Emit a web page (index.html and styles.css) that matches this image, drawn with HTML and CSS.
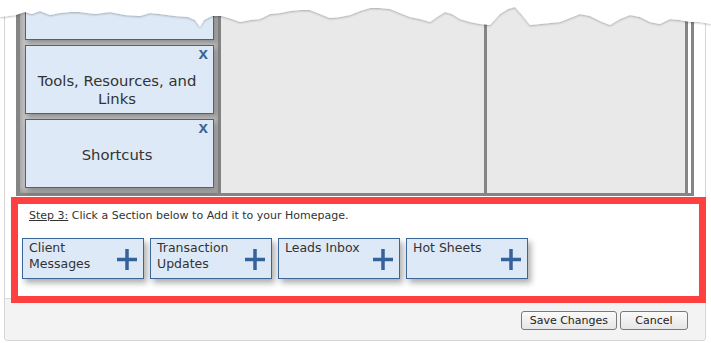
FILE: index.html
```html
<!DOCTYPE html>
<html lang="en">
<head>
  <meta charset="UTF-8" />
  <meta name="viewport" content="width=device-width, initial-scale=1" />
  <title>Customize Homepage</title>
  <link rel="stylesheet" href="styles.css">
</head>
<body>

<div class="panel">
  <div class="columns">
    <div class="col col-main">
      <div class="section-card section-card-cut"></div>
      <div class="section-card">
        <span class="close">x</span>
        <div class="section-title">Tools, Resources, and Links</div>
      </div>
      <div class="section-card">
        <span class="close">x</span>
        <div class="section-title">Shortcuts</div>
      </div>
    </div>
    <div class="col col-wide"></div>
    <div class="col col-side"></div>
  </div>

  <div class="step">
    <div class="step-text"><span class="step-label">Step 3:</span> Click a Section below to Add it to your Homepage.</div>
    <div class="add-list">
      <div class="add-card">
        <span class="add-name">Client<br>Messages</span>
        <svg class="plus" width="20" height="21" viewBox="0 0 20 21"><path d="M10 0V21M0 10.5H20" /></svg>
      </div>
      <div class="add-card">
        <span class="add-name">Transaction<br>Updates</span>
        <svg class="plus" width="20" height="21" viewBox="0 0 20 21"><path d="M10 0V21M0 10.5H20" /></svg>
      </div>
      <div class="add-card">
        <span class="add-name">Leads Inbox</span>
        <svg class="plus" width="20" height="21" viewBox="0 0 20 21"><path d="M10 0V21M0 10.5H20" /></svg>
      </div>
      <div class="add-card">
        <span class="add-name">Hot Sheets</span>
        <svg class="plus" width="20" height="21" viewBox="0 0 20 21"><path d="M10 0V21M0 10.5H20" /></svg>
      </div>
    </div>
  </div>

  <footer class="actions">
    <button class="btn">Save Changes</button>
    <button class="btn btn-cancel">Cancel</button>
  </footer>
</div>

<!-- torn edge of the cropped screenshot -->
<svg class="torn" width="711" height="34" viewBox="0 0 711 34">
  <defs>
    <filter id="tornShadow" x="-5%" y="-50%" width="110%" height="200%">
      <feDropShadow dx="0" dy="1" stdDeviation="1.2" flood-color="#000" flood-opacity="0.28" />
    </filter>
  </defs>
  <polygon filter="url(#tornShadow)" fill="#fff" points="0,0 0,17 16,15 25,12 32,14 40,11 50,15 60,13 70,12 80,12 95,14 110,12 125,15 140,16 150,13 160,14 175,16 188,17 195,20 200,27 204,20 212,16 222,16 232,19 240,22 250,20 260,19 270,14 280,13 290,11 300,10 310,10 320,14 330,18 340,17 350,15 360,11 370,8 380,8 390,9 400,13 410,17 420,19 430,22 437,17 445,12 452,14 460,19 470,22 480,24 490,25 500,14 508,9 515,7 522,15 530,25 540,24 550,23 560,22 570,18 580,14 590,16 600,21 610,25 620,19 630,15 640,17 650,22 660,24 670,19 680,20 690,22 700,22 711,24 711,0" />
</svg>

</body>
</html>
```

FILE: styles.css
```css
html, body {
  margin: 0;
  background: #fff;
  font-family: "DejaVu Sans", Verdana, sans-serif;
  color: #333;
  overflow: hidden;
}
.panel {
  margin-left: 4px;
  width: 702px;
  box-sizing: border-box;
  border: 1px solid #d6d6d6;
  border-top: none;
  border-radius: 0 0 4px 4px;
  background: #fff;
}
.columns {
  display: flex;
  margin: -34px 0 0 11px;
  width: 678px;
  box-sizing: border-box;
  border-left: 4px solid #858585;
  border-right: 3px solid #858585;
  border-bottom: 3px solid #858585;
  padding-right: 3px;
  background: #fff;
}
.col {
  box-sizing: border-box;
  border-right: 3px solid #858585;
  background: #e9e9e9;
}
.col-main {
  width: 201px;
  padding: 5px 4px 5px 5px;
  background: #c9c9c9;
  box-shadow: inset 0 0 6px rgba(0,0,0,0.35);
  display: flex;
  flex-direction: column;
  gap: 5px;
}
.col-wide { width: 266px; }
.col-side { width: 201px; }
.section-card {
  height: 69px;
  box-sizing: border-box;
  border: 1px solid #3b6698;
  background: #dde9f6;
  box-shadow: 2px 3px 5px rgba(0,0,0,0.3);
  padding: 1px 5px 0 5px;
}
.close {
  display: block;
  height: 14px;
  line-height: 14px;
  text-align: right;
  font-family: "Liberation Sans", Arial, sans-serif;
  font-weight: bold;
  font-size: 17px;
  color: #3b6698;
}
.section-title {
  margin-top: 11px;
  padding-right: 5px;
  text-align: center;
  font-size: 14.8px;
  line-height: 18px;
}
.step {
  position: relative;
  height: 102px;
  box-sizing: border-box;
  padding: 13px 0 0 17px;
}
.step::after {
  content: '';
  position: absolute;
  top: 1px;
  left: 6px;
  right: -1px;
  height: 106px;
  box-sizing: border-box;
  border: 7px solid #ff4040;
  pointer-events: none;
}
.step-text {
  margin-left: 7px;
  font-size: 11px;
  line-height: 14px;
}
.step-label { text-decoration: underline; }
.add-list {
  display: flex;
  gap: 6px;
  margin-top: 15px;
}
.add-card {
  display: flex;
  justify-content: space-between;
  align-items: flex-start;
  width: 122px;
  height: 41px;
  box-sizing: border-box;
  border: 1px solid #3b6698;
  background: #dde9f6;
  box-shadow: 3px 4px 6px rgba(0,0,0,0.32);
  padding: 1px 6px 0 6px;
  cursor: pointer;
}
.add-name {
  font-size: 12.5px;
  line-height: 15.5px;
}
.plus {
  flex-shrink: 0;
  margin-top: 9px;
}
.plus path {
  stroke: #33639a;
  stroke-width: 3.5;
  fill: none;
}
.actions {
  display: flex;
  justify-content: flex-end;
  gap: 3px;
  height: 42px;
  box-sizing: border-box;
  border-top: 1px solid #dcdcdc;
  background: #f3f3f3;
  border-radius: 0 0 4px 4px;
  padding: 12px 17px 0 0;
}
.btn {
  height: 19px;
  padding: 0 8px;
  font-family: "DejaVu Sans", Verdana, sans-serif;
  font-size: 11px;
  color: #222;
  background: linear-gradient(#fafafa, #e6e6e6);
  border: 1px solid #7a7a7a;
  border-radius: 3px;
  cursor: pointer;
}
.btn-cancel { min-width: 68px; }
.torn {
  position: absolute;
  top: 0;
  left: 0;
}
```
